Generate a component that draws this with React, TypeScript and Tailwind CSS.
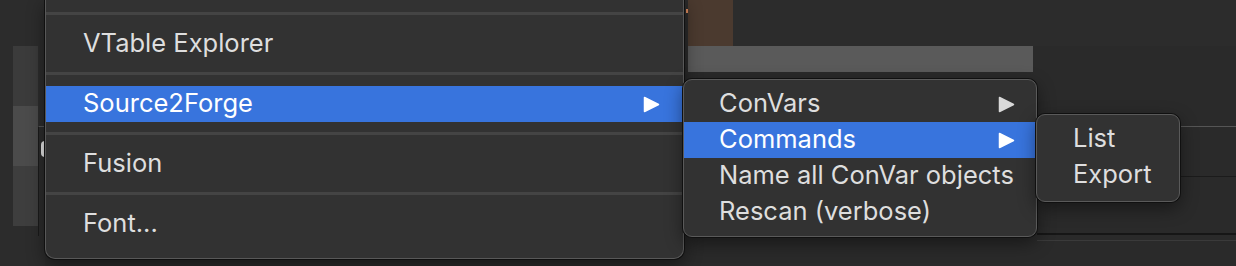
import React from 'react';

type Item = { label: string; active?: boolean; sub?: boolean };

function Arrow({ active }: { active?: boolean }) {
    return (
        <svg width="17" height="17" viewBox="0 0 17 17" className="shrink-0">
            <polygon
                points="1.5,1.5 15.5,8.5 1.5,15.5"
                fill={active ? '#ffffff' : '#d9d9d9'}
                stroke={active ? '#ffffff' : '#d9d9d9'}
                strokeWidth="1.5"
                strokeLinejoin="round"
            />
        </svg>
    );
}

function Row({ item, pl, pr }: { item: Item; pl: string; pr: string }) {
    return (
        <div
            className={`flex items-center justify-between h-[36px] ${pl} ${pr} ${
                item.active ? 'bg-[#3874dd] text-white' : 'text-[#dedede]'
            }`}
        >
            <span className="pb-[2px]">{item.label}</span>
            {item.sub && <Arrow active={item.active} />}
        </div>
    );
}

export default function App() {
    const mainItems: Item[] = [
        { label: 'VTable Explorer' },
        { label: 'Source2Forge', active: true, sub: true },
        { label: 'Fusion' },
        { label: 'Font...' },
    ];

    const subItems: Item[] = [
        { label: 'ConVars', sub: true },
        { label: 'Commands', active: true, sub: true },
        { label: 'Name all ConVar objects' },
        { label: 'Rescan (verbose)' },
    ];

    const cmdItems: Item[] = [{ label: 'List' }, { label: 'Export' }];

    return (
        <div
            className="relative w-[1236px] h-[266px] overflow-hidden bg-[#2a2a2a] text-[25.5px] leading-none"
            style={{ fontFamily: 'Inter, "Liberation Sans", sans-serif' }}
        >
            {/* window underneath */}
            <div className="flex h-full">
                <div className="flex w-[45px] shrink-0 bg-[#2c2c2c]">
                    <div className="ml-[13px] w-[27px] pt-[46px] flex flex-col">
                        <div className="h-[60px] bg-[#3b3b3b]" />
                        <div className="h-[60px] bg-[#4b4b4b]" />
                        <div className="h-[60px] bg-[#3e3e3e]" />
                    </div>
                    <div className="flex-1 pt-[126px]">
                        <div className="h-[110px] border-l border-t border-[#1a1a1a] border-t-[#555555] flex items-start pt-[14px]">
                            <div className="ml-[2px] w-[4px] h-[16px] rounded-l-full bg-[#e6e6e6]" />
                        </div>
                    </div>
                </div>
                <div className="w-[641px] shrink-0" />
                <div className="flex-1 flex flex-col">
                    <div className="flex h-[46px]">
                        <div className="w-[2px] flex items-start pt-[9px]">
                            <div className="w-[2px] h-[4px] bg-[#d8875a]" />
                        </div>
                        <div className="w-[45px] bg-[#4b3a2f]" />
                        <div className="flex-1 bg-[#2c2c2c]" />
                    </div>
                    <div className="ml-[2px] w-[345px] h-[26px] bg-[#5a5a5a]" />
                    <div className="mt-[54px] ml-[494px] h-[51px] border-t border-b border-t-[#555555] border-b-[#1b1b1b]" />
                    <div className="mt-[56px] ml-[351px] h-[2px] bg-[#161616]" />
                    <div className="mt-[5px] ml-[351px] h-px bg-[#3a3a3a]" />
                </div>
            </div>

            {/* main menu */}
            <div className="absolute left-[45px] top-[-1px] w-[639px] bg-[#323232] border border-t-0 border-[#585858] rounded-b-[10px] shadow-[0_0_0_1px_#101010,0_6px_18px_rgba(0,0,0,0.45)] pt-[13px] pb-[6px]">
                {mainItems.map((item) => (
                    <div key={item.label}>
                        <div className="h-[3px] bg-[#444444]" />
                        <div className="pt-[11px] pb-[10px]">
                            <Row item={item} pl="pl-[37px]" pr="pr-[23px]" />
                        </div>
                    </div>
                ))}
            </div>

            {/* Source2Forge submenu */}
            <div className="absolute left-[683px] top-[79px] w-[354px] bg-[#323232] border border-[#5a5a5a] rounded-[9px] shadow-[0_0_0_1px_#101010,0_6px_18px_rgba(0,0,0,0.45)] py-[6px]">
                {subItems.map((item) => (
                    <Row key={item.label} item={item} pl="pl-[35px]" pr="pr-[21px]" />
                ))}
            </div>

            {/* Commands submenu */}
            <div className="absolute left-[1036px] top-[114px] w-[144px] bg-[#323232] border border-[#5a5a5a] rounded-[9px] shadow-[0_0_0_1px_#101010,0_6px_18px_rgba(0,0,0,0.45)] pt-[6px] pb-[8px]">
                {cmdItems.map((item) => (
                    <Row key={item.label} item={item} pl="pl-[36px]" pr="pr-[10px]" />
                ))}
            </div>
        </div>
    );
}
